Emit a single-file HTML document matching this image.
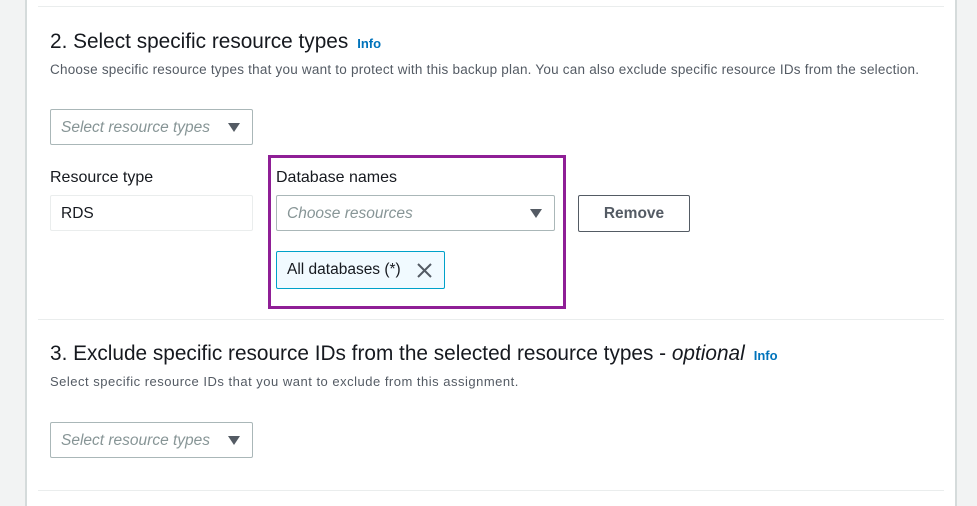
<!DOCTYPE html>
<html><head><meta charset="utf-8"><style>
*{margin:0;padding:0;box-sizing:border-box}
body{width:977px;height:506px;background:#f2f3f3;font-family:"Liberation Sans",sans-serif;position:relative;overflow:hidden;color:#16191f}
.panel{position:absolute;left:25px;top:0;width:932px;height:506px;background:#fff;border-left:2px solid #d5dbdb;border-right:2px solid #d5dbdb}
.a{position:absolute;white-space:nowrap}
.sep{position:absolute;left:38px;width:906px;height:1px;background:#eaeded}
h2{position:absolute;font-weight:normal;font-size:20.8px;white-space:nowrap;color:#16191f}
.info{color:#0073bb;font-weight:bold;font-size:13px;margin-left:9px;font-style:normal}
.desc{font-size:13.5px;color:#545b64;letter-spacing:.22px}
.box{position:absolute;border:1px solid #aab7b8;border-radius:2px;height:36px;font-size:15.5px;color:#879596;font-style:italic;padding:9px 10px;white-space:nowrap}
.tri{position:absolute;right:12px;top:13px;width:0;height:0;border-left:6.5px solid transparent;border-right:6.5px solid transparent;border-top:9px solid #545b64}
.lbl{font-size:16px;color:#16191f}
</style></head><body>
<div class="panel"></div>
<div class="sep" style="top:6px"></div>
<h2 style="left:50px;top:30px">2. Select specific resource types<span class="info">Info</span></h2>
<div class="a desc" style="left:50px;top:62px">Choose specific resource types that you want to protect with this backup plan. You can also exclude specific resource IDs from the selection.</div>
<div class="box" style="left:50px;top:109px;width:203px">Select resource types<div class="tri"></div></div>
<div class="a lbl" style="left:50px;top:169px">Resource type</div>
<div class="box" style="left:50px;top:195px;width:203px;border-color:#eaeded;color:#16191f;font-style:normal">RDS</div>
<div style="position:absolute;left:268px;top:155px;width:298px;height:154px;border:3px solid #8f1f96"></div>
<div class="a lbl" style="left:276px;top:169px">Database names</div>
<div class="box" style="left:276px;top:195px;width:279px">Choose resources<div class="tri"></div></div>
<div style="position:absolute;left:578px;top:195px;width:112px;height:37px;border:1px solid #545b64;border-radius:2px;font-weight:bold;font-size:15.5px;color:#545b64;text-align:center;line-height:35px">Remove</div>
<div style="position:absolute;left:276px;top:251px;width:169px;height:38px;border:1px solid #00a1c9;background:#f1faff;border-radius:2px;font-size:15.5px;padding:9px 10px;white-space:nowrap">All databases (*)
<svg style="position:absolute;left:140px;top:11px" width="15" height="15" viewBox="0 0 15 15"><path d="M1 1L14 14M14 1L1 14" stroke="#545b64" stroke-width="2"/></svg></div>
<div class="sep" style="top:319px"></div>
<h2 style="left:50px;top:342px">3. Exclude specific resource IDs from the selected resource types - <i>optional</i><span class="info">Info</span></h2>
<div class="a desc" style="left:50px;top:374px;font-size:13px;letter-spacing:.5px">Select specific resource IDs that you want to exclude from this assignment.</div>
<div class="box" style="left:50px;top:422px;width:203px">Select resource types<div class="tri"></div></div>
<div class="sep" style="top:490px"></div>
</body></html>
